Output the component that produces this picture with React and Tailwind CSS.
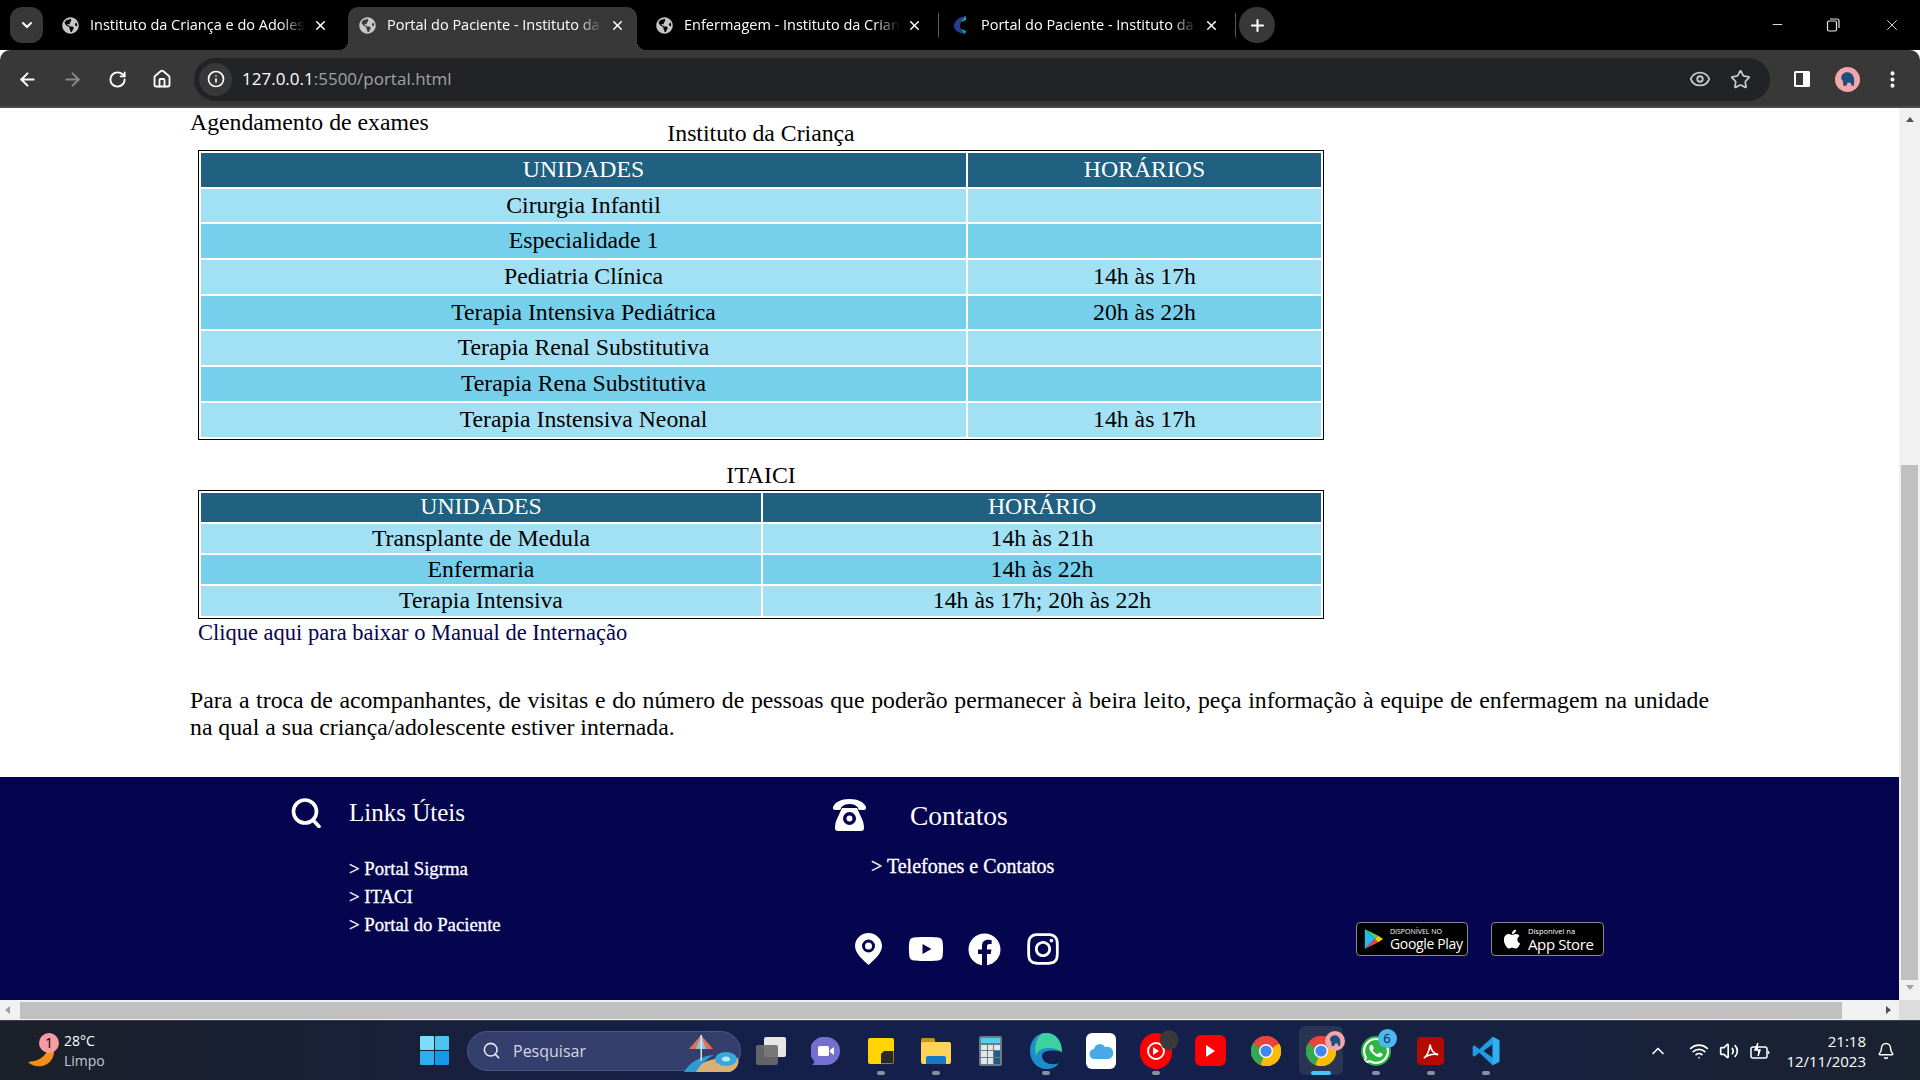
import React from "react";
import { ArrowLeft, ArrowRight, RotateCw, Home, Info, Eye, Star, EllipsisVertical, Plus, X, Minus, ChevronDown, ChevronUp, Search, Bell, Wifi, Volume2 } from "lucide-react";
import { FaYoutube, FaFacebook, FaInstagram, FaApple, FaWhatsapp, FaGlobeAmericas } from "react-icons/fa";

const serif = "font-['Liberation_Serif',serif]";

const tabs = [
  { title: "Instituto da Criança e do Adolescente", sep: false },
  { title: "Portal do Paciente - Instituto da Criança", active: true },
  { title: "Enfermagem - Instituto da Criança", sep: true },
  { title: "Portal do Paciente - Instituto da Criança", logo: true, sep: true },
];

function TabLogo() {
  return (
    <svg viewBox="0 0 20 20" className="w-5 h-5">
      <path d="M15 1C8 2 3 6 3 11c0 4 4 7 11 8-3-3-5-5-5-8s2-6 6-10z" fill="#2b3a8f" />
      <path d="M15 1c-2 2-4 4-5 6l5-2z" fill="#1fa8a0" />
      <path d="M14 19c-2-2-3-3-4-5l5 2z" fill="#1fa8a0" />
    </svg>
  );
}

function Tab({ title, active, logo, sep }) {
  return (
    <div className="w-[297px] h-[43px] flex items-start">
      <div className={`relative w-[289px] h-[43px] rounded-t-[10px] flex items-center pl-[9px] pb-[7px] ${active ? "bg-[#383838]" : ""}`}>
        {active && <span className="absolute -left-[10px] bottom-0 w-[10px] h-[10px] bg-[radial-gradient(circle_at_0_0,transparent_10px,#383838_10.5px)]" />}
        {active && <span className="absolute -right-[10px] bottom-0 w-[10px] h-[10px] bg-[radial-gradient(circle_at_100%_0,transparent_10px,#383838_10.5px)]" />}
        <span className="w-5 h-5 flex items-center justify-center shrink-0">
          {logo ? <TabLogo /> : <FaGlobeAmericas size={17} className="text-[#c4c7c5]" />}
        </span>
        <span className="ml-[10px] w-[216px] overflow-hidden whitespace-nowrap text-[14.5px] text-white [mask-image:linear-gradient(to_right,black_88%,transparent)]">
          {title}
        </span>
        <X size={15} strokeWidth={2.4} className="ml-[7px] text-white" />
        {sep && <span className="absolute -right-[5px] top-[6px] w-px h-[24px] bg-[#5a5a5a]" />}
      </div>
    </div>
  );
}

function TabBar() {
  return (
    <div className="h-[50px] bg-black flex items-end shrink-0 font-['Open_Sans',sans-serif] relative">
      <div className="w-[51px] h-[43px] flex items-start pl-[10px]">
        <div className="w-[33px] h-[36px] rounded-[12px] bg-[#383838] flex items-center justify-center">
          <ChevronDown size={16} strokeWidth={3} className="text-white" />
        </div>
      </div>
      {tabs.map((t, i) => (
        <Tab key={i} {...t} />
      ))}
      <div className="w-[36px] h-[36px] rounded-full bg-[#383838] flex items-center justify-center self-start mt-[7px]">
        <Plus size={19} strokeWidth={2.6} className="text-white" />
      </div>
      <div className="ml-auto self-start flex items-center h-[49px] text-[#e8e8e8]">
        <Minus size={15} strokeWidth={1.5} className="mr-[41px]" />
        <svg viewBox="0 0 14 14" className="w-[14px] h-[14px] mr-[43px]" fill="none" stroke="currentColor" strokeWidth="1.2">
          <rect x="1.5" y="3" width="9" height="10" rx="1.5" />
          <path d="M4 1h7a2 2 0 0 1 2 2v7" />
        </svg>
        <X size={18} strokeWidth={1.2} className="mr-[19px]" />
      </div>
    </div>
  );
}

function SidePanelIcon() {
  return (
    <svg viewBox="0 0 20 20" className="w-5 h-5">
      <rect x="2" y="2" width="16" height="16" rx="1.5" fill="#fff" />
      <rect x="4" y="4" width="7" height="12" fill="#383838" />
    </svg>
  );
}

function Avatar({ className }) {
  return (
    <svg viewBox="0 0 24 24" className={className}>
      <circle cx="12" cy="12" r="12" fill="#f4a6ac" />
      <path d="M6 10c0-3 3-5 6-5s5 2 6 5c.7 2 .5 5 0 8h-2l-1-3h-3l-1 3H8l-.5-5C6.500 12.500 6 11.500 6 10z" fill="#1f4f7c" />
    </svg>
  );
}

function Toolbar() {
  return (
    <div className="h-[58px] bg-[#383838] flex items-center shrink-0 rounded-t-[10px] pt-[2px] border-b-2 border-[#4a4a4a] font-['Open_Sans',sans-serif]">
      <ArrowLeft size={21} strokeWidth={2.2} className="ml-[17px] text-white" />
      <ArrowRight size={21} strokeWidth={2.2} className="ml-[24px] text-[#8a8a8a]" />
      <RotateCw size={19} strokeWidth={2.4} className="ml-[25px] text-white" />
      <Home size={20} strokeWidth={2.2} className="ml-[25px] text-white" />
      <div className="ml-[22px] w-[1576px] h-[43px] rounded-full bg-[#212327] flex items-center pl-[5px]">
        <div className="w-[33px] h-[33px] rounded-full bg-[#383838] flex items-center justify-center">
          <Info size={18} strokeWidth={2.2} className="text-white" />
        </div>
        <span className="ml-[10px] text-[17px] text-white">
          127.0.0.1<span className="text-[#a0a3a8]">:5500/portal.html</span>
        </span>
        <Eye size={22} strokeWidth={2} className="ml-auto text-[#c8c8c8]" />
        <Star size={21} strokeWidth={2} className="ml-[19px] mr-[19px] text-[#c8c8c8]" />
      </div>
      <span className="ml-[22px]"><SidePanelIcon /></span>
      <Avatar className="ml-[23px] w-[25px] h-[25px]" />
      <EllipsisVertical size={21} strokeWidth={2.6} className="ml-[22px] text-white" />
    </div>
  );
}

const table1 = [
  ["Cirurgia Infantil", ""],
  ["Especialidade 1", ""],
  ["Pediatria Clínica", "14h às 17h"],
  ["Terapia Intensiva Pediátrica", "20h às 22h"],
  ["Terapia Renal Substitutiva", ""],
  ["Terapia Rena Substitutiva", ""],
  ["Terapia Instensiva Neonal", "14h às 17h"],
];

const table2 = [
  ["Transplante de Medula", "14h às 21h"],
  ["Enfermaria", "14h às 22h"],
  ["Terapia Intensiva", "14h às 17h; 20h às 22h"],
];

function DataTable({ caption, capClass, head, rows, first, rowH, mt }) {
  return (
    <table className={`ml-2 w-[1126px] table-fixed border-separate border-spacing-[2px] border border-black text-[23.75px] leading-none ${mt}`}>
      <caption className={`h-[30px] text-black ${capClass}`}>{caption}</caption>
      <colgroup>
        <col className={first} />
        <col />
      </colgroup>
      <thead>
        <tr className={`${rowH} bg-[#206080] text-white`}>
          <th className="font-normal p-0">{head[0]}</th>
          <th className="font-normal p-0">{head[1]}</th>
        </tr>
      </thead>
      <tbody>
        {rows.map((r, i) => (
          <tr key={i} className={`${rowH} text-black ${i % 2 ? "bg-[#76d0ec]" : "bg-[#a2e0f4]"}`}>
            <td className="p-0 text-center">{r[0]}</td>
            <td className="p-0 text-center">{r[1]}</td>
          </tr>
        ))}
      </tbody>
    </table>
  );
}

function QIcon() {
  return (
    <svg viewBox="0 0 33 30" className="w-[33px] h-[30px] shrink-0" fill="none" stroke="#fff" strokeWidth="3.600" strokeLinecap="round">
      <circle cx="15" cy="13.500" r="11.500" />
      <path d="M23 22l6 6.500" />
    </svg>
  );
}

function PinIcon() {
  return (
    <svg viewBox="0 0 27 32" className="w-[27px] h-[32px]">
      <path fillRule="evenodd" fill="#fff" d="M13.5 0C6 0 0 6 0 13c0 7 7 13 13.5 19C20 26 27 20 27 13 27 6 21 0 13.5 0zm0 6.5a6.5 6.5 0 1 1 0 13 6.5 6.5 0 0 1 0-13zm0 3a3.5 3.5 0 1 0 0 7 3.5 3.5 0 0 0 0-7z" />
    </svg>
  );
}

function PhoneIcon() {
  return (
    <svg viewBox="0 0 33 32" className="w-[33px] h-[32px]">
      <path fill="#fff" d="M16.5 0C8 0 2 3 0 8c-.4 1.500.3 3 2 3h4c1.500 0 2-1 2-2.500C10 6 13 5 16.500 5s6.500 1 8.500 3.500c0 1.500.5 2.500 2 2.500h4c1.700 0 2.400-1.500 2-3C31 3 25 0 16.500 0z" />
      <path fillRule="evenodd" fill="#fff" d="M9 9h15l5 11c2 4 2 8 2 9 0 2-1 3-3 3H5c-2 0-3-1-3-3 0-1 0-5 2-9zm7.500 4a6.500 6.500 0 1 0 0 13 6.500 6.500 0 0 0 0-13zm0 3.500a3 3 0 1 1 0 6 3 3 0 0 1 0-6z" />
    </svg>
  );
}

function PlayIcon() {
  return (
    <svg viewBox="0 0 24 26" className="w-[20px] h-[24px]">
      <path d="M1 1l12 12L1 25z" fill="#2ab6f2" />
      <path d="M1 1l12 12 4-4z" fill="#37d67a" />
      <path d="M1 25l12-12 4 4z" fill="#ef4258" />
      <path d="M17 9l6 4-6 4-4-4z" fill="#fdc70c" />
    </svg>
  );
}

function Footer() {
  return (
    <footer className="h-[223px] bg-[#05054f] text-white flex shrink-0">
      <div className="w-[833px] pl-[290px] pt-[21px] flex items-start">
        <QIcon />
        <div className="ml-[26px]">
          <h3 className="text-[25px] leading-[30px]">Links Úteis</h3>
          <ul className="mt-[27px] text-[18.75px] leading-[28px] [-webkit-text-stroke:0.3px_white]">
            <li>&gt; Portal Sigrma</li>
            <li>&gt; ITACI</li>
            <li>&gt; Portal do Paciente</li>
          </ul>
        </div>
      </div>
      <div className="w-[523px] pt-[21px]">
        <div className="flex items-center">
          <PhoneIcon />
          <h3 className="ml-[44px] text-[27.5px] leading-[32px] pt-[2px]">Contatos</h3>
        </div>
        <p className="ml-[38px] mt-[20px] text-[20px] leading-[28px] [-webkit-text-stroke:0.3px_white]">&gt; Telefones e Contatos</p>
        <div className="ml-[22px] mt-[51px] flex items-center">
          <PinIcon />
          <FaYoutube size={36} className="ml-[26px]" />
          <FaFacebook size={33} className="ml-[24px]" />
          <FaInstagram size={36} className="ml-[24px]" />
        </div>
      </div>
      <div className="pt-[145px] flex items-start gap-[23px] font-['Open_Sans',sans-serif]">
        <div className="w-[112px] h-[34px] rounded-[4px] bg-black border border-[#8a8a8a] flex items-center pl-[7px]">
          <PlayIcon />
          <div className="ml-[6px] leading-none whitespace-nowrap">
            <div className="text-[7px] leading-[9px]">DISPONÍVEL NO</div>
            <div className="text-[14px] leading-[15px] tracking-tight">Google Play</div>
          </div>
        </div>
        <div className="w-[113px] h-[34px] rounded-[4px] bg-black border border-[#8a8a8a] flex items-center pl-[9px]">
          <FaApple size={22} />
          <div className="ml-[5px] leading-none whitespace-nowrap">
            <div className="text-[7.5px] leading-[9px]">Disponível na</div>
            <div className="text-[15px] leading-[16px] tracking-tight">App Store</div>
          </div>
        </div>
      </div>
    </footer>
  );
}

function VerticalScrollbar() {
  return (
    <div className="w-[21px] bg-[#f1f1f1] flex flex-col items-center shrink-0">
      <span className="mt-[9px] w-0 h-0 border-x-[4.5px] border-x-transparent border-b-[5px] border-b-[#505050]" />
      <div className="flex-1 w-full px-[2px] flex flex-col justify-end pb-[5px]">
        <div className="h-[515px] bg-[#c0c0c0]" />
      </div>
      <span className="mb-[10px] w-0 h-0 border-x-[4.5px] border-x-transparent border-t-[5px] border-t-[#a0a0a0]" />
    </div>
  );
}

function HorizontalScrollbar() {
  return (
    <div className="h-[20px] bg-[#f1f1f1] flex items-center shrink-0">
      <span className="ml-[5px] w-0 h-0 border-y-[4.5px] border-y-transparent border-r-[5px] border-r-[#a0a0a0]" />
      <div className="ml-[10px] w-[1822px] h-[17px] bg-[#c0c0c0]" />
      <span className="ml-[44px] w-0 h-0 border-y-[4.5px] border-y-transparent border-l-[5px] border-l-[#505050]" />
      <div className="ml-auto w-[21px] h-full bg-[#dcdcdc]" />
    </div>
  );
}

function ChromeIcon() {
  return (
    <svg viewBox="0 0 32 32" className="w-[30px] h-[30px]">
      <circle cx="16" cy="16" r="16" fill="#e8453c" />
      <path d="M16 16L2 8A16 16 0 0 0 10 31z" fill="#34a853" />
      <path d="M16 16l14-8A16 16 0 0 1 10 31z" fill="#fbbc04" />
      <path d="M16 16L2.2 8A16 16 0 0 1 16 0a16 16 0 0 1 13.8 8z" fill="#e8453c" />
      <circle cx="16" cy="16" r="7.5" fill="#fff" />
      <circle cx="16" cy="16" r="6" fill="#4285f4" />
    </svg>
  );
}

function TaskIcon({ dot, children }) {
  return (
    <div className="relative w-[55px] h-[50px] flex items-center justify-center shrink-0">
      {children}
      {dot && <span className="absolute bottom-[1px] w-[8px] h-[4px] rounded-full bg-[#8b90a0]" />}
    </div>
  );
}

function Taskbar() {
  return (
    <div className="h-[60px] shrink-0 flex items-center border-t border-[#3a4050] bg-[linear-gradient(90deg,#1b2029_0%,#15204a_40%,#14204d_60%,#1b2230_100%)] text-white font-['Open_Sans',sans-serif]">
      {/* weather */}
      <div className="w-[420px] flex items-center pl-[26px] h-full shrink-0">
        <div className="relative w-[34px] h-[36px]">
          <svg viewBox="0 0 30 36" className="w-[30px] h-[36px]">
            <path d="M22 4c3 14-4 24-20 25 8 8 24 5 26-9 .7-6-2-12-6-16z" fill="#f39019" />
          </svg>
          <span className="absolute left-[13px] top-0 w-[20px] h-[20px] rounded-full bg-[#f59ca2] text-black text-[14px] leading-[20px] text-center">1</span>
        </div>
        <div className="ml-[4px] text-[14px] leading-[20px]">
          <div>28°C</div>
          <div className="text-[#c6cad2]">Limpo</div>
        </div>
      </div>
      {/* start */}
      <svg viewBox="0 0 29 29" className="w-[29px] h-[29px] shrink-0">
        <rect x="0" y="0" width="14" height="14" rx="1" fill="#7fdcf8" />
        <rect x="15" y="0" width="14" height="14" rx="1" fill="#4cc4f2" />
        <rect x="0" y="15" width="14" height="14" rx="1" fill="#2eaef0" />
        <rect x="15" y="15" width="14" height="14" rx="1" fill="#1898ea" />
      </svg>
      {/* search */}
      <div className="ml-[18px] w-[274px] h-[40px] rounded-full bg-[#343f6e] border border-[#4a5580] flex items-center pl-[14px] relative shrink-0">
        <Search size={19} strokeWidth={2} className="text-[#e8eaf0]" />
        <span className="ml-[12px] text-[16px] text-[#d3d6e0]">Pesquisar</span>
        <svg viewBox="0 0 64 40" className="absolute right-0 top-0 w-[64px] h-[40px]">
          <path d="M16 40C24 28 44 24 62 26c2 6-2 12-8 14z" fill="#d9b076" />
          <path d="M8 40c6-10 16-16 30-17-8 4-14 10-18 17z" fill="#2e9bd6" />
          <ellipse cx="50" cy="27" rx="11" ry="7" fill="#38a8dc" />
          <ellipse cx="50" cy="27" rx="4" ry="2.5" fill="#bfe8f8" />
          <path d="M25 3L13 17h24z" fill="#e07058" />
          <path d="M25 3l-5 14h10z" fill="#8cc4d8" />
          <rect x="24.5" y="3" width="1.5" height="26" fill="#e0e0e0" />
        </svg>
      </div>
      {/* pinned */}
      <div className="ml-[2px] flex items-center">
        <TaskIcon>
          <div className="relative w-[30px] h-[28px]">
            <span className="absolute right-0 top-0 w-[22px] h-[20px] bg-[#e6e6e6] rounded-[2px]" />
            <span className="absolute left-0 bottom-0 w-[22px] h-[20px] bg-[#6b6b6b]/90 rounded-[2px]" />
          </div>
        </TaskIcon>
        <TaskIcon>
          <svg viewBox="0 0 29 28" className="w-[29px] h-[28px]">
            <path d="M15 0a14 14 0 0 1 0 28H1c1.500-1 2.200-2 2.200-4A14 14 0 0 1 15 0z" fill="#7570cf" />
            <rect x="7" y="9" width="11" height="10" rx="1.5" fill="#fff" />
            <path d="M19 13l4-3v8l-4-3z" fill="#fff" />
          </svg>
        </TaskIcon>
        <TaskIcon dot>
          <div className="relative w-[26px] h-[26px] bg-[#ffd400] rounded-[2px]">
            <span className="absolute right-0 bottom-0 w-[13px] h-[13px] bg-[#2a2a2a] rounded-tl-[3px] [clip-path:polygon(100%_0,100%_100%,0_100%,0_30%,30%_0)]" />
          </div>
        </TaskIcon>
        <TaskIcon dot>
          <div className="relative w-[30px] h-[26px]">
            <span className="absolute left-0 top-0 w-[14px] h-[8px] bg-[#c9931f] rounded-t-[2px]" />
            <span className="absolute left-0 bottom-0 w-[30px] h-[22px] bg-[#ffd25a] rounded-[2px]" />
            <span className="absolute left-[5px] bottom-0 w-[20px] h-[8px] bg-[#1679c6] rounded-t-[2px]" />
          </div>
        </TaskIcon>
        <TaskIcon>
          <div className="w-[23px] h-[30px] bg-[#6f7d86] rounded-[2px] p-[2px] flex flex-col gap-[2px]">
            <span className="h-[5px] bg-[#4fd0ee]" />
            <div className="grid grid-cols-3 gap-[1px] flex-1">
              {[...Array(9)].map((_, i) => (
                <span key={i} className={i === 5 || i === 8 ? "bg-[#1f5d8c]" : "bg-[#e2e6e8]"} />
              ))}
            </div>
          </div>
        </TaskIcon>
        <TaskIcon dot>
          <svg viewBox="0 0 32 36" className="w-[32px] h-[36px]">
            <path d="M16 0C6 0 0 8 0 18c0 10 7 18 16 18 6 0 10-2 13-6-8 3-16 0-17-6-1-6 8-8 20-5C32 8 26 0 16 0z" fill="#1c8ecb" />
            <path d="M16 0c9 0 16 7 16 19-8-6-24-6-26 4C4 14 6 0 16 0z" fill="#3fd0a0" />
          </svg>
        </TaskIcon>
        <TaskIcon>
          <div className="w-[30px] h-[36px] bg-white rounded-[6px] flex items-center justify-center">
            <svg viewBox="0 0 24 16" className="w-[24px] h-[16px]">
              <path d="M6 16a5 5 0 0 1-1-10 6 6 0 0 1 11-2 5 5 0 0 1 4 12z" fill="#4aa8e8" />
            </svg>
          </div>
        </TaskIcon>
        <TaskIcon dot>
          <div className="relative w-[32px] h-[36px] rounded-full bg-[#ff0000] flex items-center justify-center">
            <span className="w-[18px] h-[18px] rounded-full border-2 border-white flex items-center justify-center">
              <span className="w-0 h-0 border-y-[4px] border-y-transparent border-l-[6px] border-l-white" />
            </span>
            <span className="absolute -right-[6px] -top-[3px] w-[18px] h-[20px] rounded-full bg-[#3a3a3a]" />
          </div>
        </TaskIcon>
        <TaskIcon>
          <div className="w-[31px] h-[31px] rounded-[6px] bg-[#f00] flex items-center justify-center">
            <span className="w-0 h-0 border-y-[6px] border-y-transparent border-l-[9px] border-l-white" />
          </div>
        </TaskIcon>
        <TaskIcon>
          <ChromeIcon />
        </TaskIcon>
        <TaskIcon>
          <div className="relative w-[44px] h-[49px] rounded-md bg-[#2a3453] flex items-center justify-center">
            <ChromeIcon />
            <Avatar className="absolute right-[-2px] top-[5px] w-[20px] h-[20px]" />
            <span className="absolute bottom-0 w-[20px] h-[4px] rounded-full bg-[#4cc2ff]" />
          </div>
        </TaskIcon>
        <TaskIcon dot>
          <div className="relative">
            <FaWhatsapp size={30} className="text-white bg-[#2bb741] rounded-full" />
            <span className="absolute -right-[6px] -top-[7px] w-[19px] h-[19px] rounded-full bg-[#4db8f0] text-[#10203f] text-[13px] leading-[19px] text-center">6</span>
          </div>
        </TaskIcon>
        <TaskIcon dot>
          <div className="w-[27px] h-[28px] rounded-[4px] bg-[#b30b00] flex items-center justify-center">
            <svg viewBox="0 0 20 20" className="w-[18px] h-[18px]" fill="none" stroke="#fff" strokeWidth="1.8">
              <path d="M2 18c3-2 6-8 7-15 1 7 4 10 9 11-6-1-11 0-16 4z" />
            </svg>
          </div>
        </TaskIcon>
        <TaskIcon dot>
          <svg viewBox="0 0 32 36" className="w-[30px] h-[30px]">
            <path fillRule="evenodd" d="M24 1L8 16 2 11 0 13v10l2 2 6-5 16 15 8-4V5zm0 9v16l-11-8z" fill="#1f9ce4" />
            <path d="M24 1l8 4v26l-8 4z" fill="#2fb0f0" />
          </svg>
        </TaskIcon>
      </div>
      {/* tray */}
      <div className="ml-auto flex items-center pr-[25px]">
        <ChevronUp size={20} strokeWidth={2} />
        <Wifi size={20} className="ml-[21px]" />
        <Volume2 size={20} className="ml-[10px]" />
        <svg viewBox="0 0 20 20" className="ml-[11px] w-[20px] h-[20px]" fill="none" stroke="#fff" strokeWidth="1.5">
          <rect x="1" y="6" width="16" height="11" rx="2" />
          <path d="M18.5 10v3" />
          <path d="M8 2L5 9h5l-2 6" fill="#fff" />
        </svg>
        <div className="ml-[15px] w-[81px] text-right text-[15px] leading-[20px] whitespace-nowrap">
          <div>21:18</div>
          <div>12/11/2023</div>
        </div>
        <Bell size={18} className="ml-[11px]" />
      </div>
    </div>
  );
}

export default function App() {
  return (
    <div className="w-[1920px] h-[1080px] flex flex-col overflow-hidden bg-white">
      <TabBar />
      <Toolbar />
      <div className="flex-1 min-h-0 flex">
        <div className={`flex-1 min-w-0 flex flex-col ${serif}`}>
          <main className="flex-1 min-h-0 pt-[1px] pl-[190px] pr-[190px]">
            <p className="text-[23.75px] leading-[27px] text-black">Agendamento de exames</p>
            <DataTable mt="-mt-[16px]" caption="Instituto da Criança" capClass="leading-[27px]" head={["UNIDADES", "HORÁRIOS"]} rows={table1} first="w-[765px]" rowH="h-[33.7px]" />
            <DataTable mt="mt-[20px]" caption="ITAICI" capClass="leading-[30px]" head={["UNIDADES", "HORÁRIO"]} rows={table2} first="w-[560px]" rowH="h-[29.3px]" />
            <a className="ml-2 block text-[22.5px] leading-[27px] text-[#05054f]">Clique aqui para baixar o Manual de Internação</a>
            <p className="mt-[41px] text-[23.75px] leading-[27px] text-black text-justify">
              Para a troca de acompanhantes, de visitas e do número de pessoas que poderão permanecer à beira leito, peça informação à equipe de enfermagem na unidade na qual a sua criança/adolescente estiver internada.
            </p>
          </main>
          <Footer />
        </div>
        <VerticalScrollbar />
      </div>
      <HorizontalScrollbar />
      <Taskbar />
    </div>
  );
}
